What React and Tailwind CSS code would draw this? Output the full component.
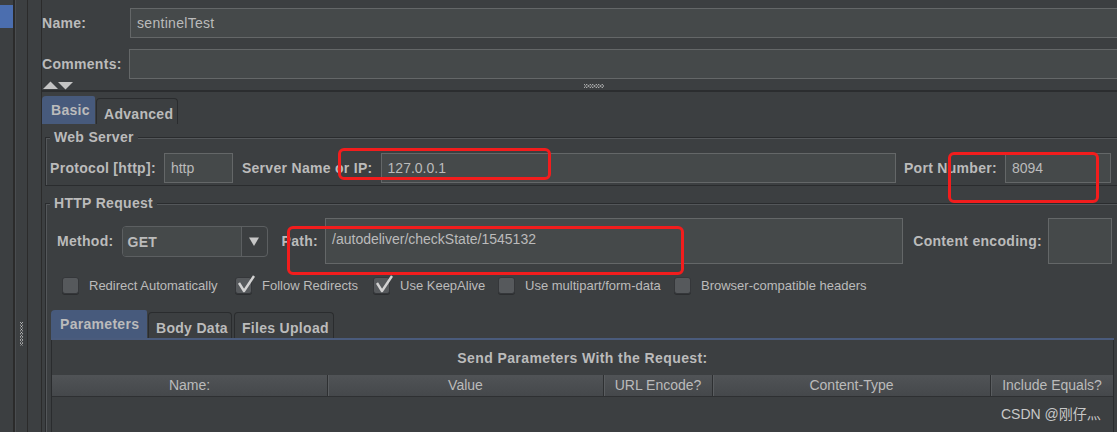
import React from 'react';

// Darcula-ish palette taken from the JMeter screenshot
const FIELD = 'bg-[#45494a] border border-[#646768]';

function Label({ children, className = '' }) {
  return (
    <span className={`font-bold text-[14px] leading-[16px] tracking-[0.3px] whitespace-nowrap shrink-0 ${className}`}>
      {children}
    </span>
  );
}

function Field({ value, className = '' }) {
  return (
    <div className={`${FIELD} flex items-center px-[6px] text-[14px] whitespace-nowrap overflow-hidden ${className}`}>
      {value}
    </div>
  );
}

function Grip({ vertical }) {
  // dotted zig-zag handle of the split panes
  if (vertical) {
    return (
      <svg width="5" height="24" viewBox="0 0 5 24">
        <polyline points="1,0 4,3 1,6 4,9 1,12 4,15 1,18 4,21 1,24" fill="none" stroke="#d6d6d6" strokeWidth="1" strokeDasharray="1 1" />
        <polyline points="4,0 1,3 4,6 1,9 4,12 1,15 4,18 1,21 4,24" fill="none" stroke="#d6d6d6" strokeWidth="1" strokeDasharray="1 1" />
      </svg>
    );
  }
  return (
    <svg width="20" height="6" viewBox="0 0 20 6">
      <polyline points="0,1 3,5 6,1 9,5 12,1 15,5 18,1 20,4" fill="none" stroke="#d6d6d6" strokeWidth="1" strokeDasharray="1 1" />
      <polyline points="0,5 3,1 6,5 9,1 12,5 15,1 18,5 20,2" fill="none" stroke="#d6d6d6" strokeWidth="1" strokeDasharray="1 1" />
    </svg>
  );
}

function CheckBox({ checked, label, className = '' }) {
  return (
    <div className={`flex items-center shrink-0 ${className}`}>
      <span className="relative w-[17px] h-[17px] rounded-[3px] bg-[#56595c] border border-[#35373a] shadow-[0_1px_0_#2c2e30] shrink-0">
        {checked && (
          <svg className="absolute left-[0px] top-[-4px]" width="21" height="20" viewBox="0 0 21 20">
            <polyline points="3,9 8,17 18,2" fill="none" stroke="#d2d2d2" strokeWidth="2.4" strokeLinejoin="round" />
          </svg>
        )}
      </span>
      <span className="ml-[10px] text-[13px] leading-[16px] whitespace-nowrap">{label}</span>
    </div>
  );
}

function Tab({ children, selected, className = '' }) {
  return selected ? (
    <div className={`h-[28px] bg-[#475a7c] rounded-tl-[4px] rounded-tr-[2px] pl-[9px] pt-[2px] shrink-0 ${className}`}>
      <Label>{children}</Label>
    </div>
  ) : (
    <div className={`h-[26px] mt-[2px] border border-b-0 border-[#2a2c2e] rounded-t-[4px] pl-[7px] pt-[3px] shrink-0 ${className}`}>
      <Label>{children}</Label>
    </div>
  );
}

function RedBox({ className }) {
  return <div className={`absolute border-[3px] border-[#f21d1d] rounded-[6px] pointer-events-none ${className}`} />;
}

const COLUMNS = [
  { name: 'Name:', w: 'w-[276px]' },
  { name: 'Value', w: 'w-[276px]' },
  { name: 'URL Encode?', w: 'w-[109px]' },
  { name: 'Content-Type', w: 'w-[278px]' },
  { name: 'Include Equals?', w: 'flex-1' },
];

export default function App() {
  return (
    <div className="relative w-[1117px] h-[432px] overflow-hidden bg-[#3c3f41] flex text-[#bbbbbb] font-['Liberation_Sans','Noto_Sans_CJK_SC',Arial,sans-serif]">
      {/* tree strip */}
      <div className="w-[13px] shrink-0 pt-[5px]">
        <div className="h-[23px] bg-[#4b6eaf]" />
      </div>
      <div className="w-[2px] shrink-0 bg-[#2b2b2b]" />
      <div className="w-[12px] shrink-0 border-l border-[#4a4d50] flex flex-col items-center pt-[322px]">
        <Grip vertical />
      </div>
      <div className="w-[14px] shrink-0 border-l border-[#2b2b2b]" />

      {/* main editor */}
      <main className="flex-1 min-w-0 border-l border-[#2b2b2b] pt-[8px] flex flex-col">
        <div className="flex items-center h-[30px]">
          <Label className="w-[88px]">Name:</Label>
          <Field value="sentinelTest" className="flex-1 h-[30px] -mr-[8px] tracking-[0.3px]" />
        </div>
        <div className="flex items-center h-[30px] mt-[11px]">
          <Label className="w-[87px]">Comments:</Label>
          <Field value="" className="flex-1 h-[30px] -mr-[8px]" />
        </div>

        {/* collapse arrows + splitter */}
        <div className="h-[13px] flex items-start border-b-2 border-[#2b2d2f]">
          <svg className="ml-[1px] mt-[2px]" width="31" height="9" viewBox="0 0 31 9">
            <polygon points="0,8 7.5,0.5 15,8" fill="#c4c4c4" />
            <polygon points="15,1 30,1 22.5,8.5" fill="#c4c4c4" />
          </svg>
          <div className="ml-[510px] mt-[4px]">
            <Grip />
          </div>
        </div>

        {/* Basic / Advanced */}
        <div className="flex items-start pt-[4px] gap-[1px]">
          <Tab selected className="w-[53px]">Basic</Tab>
          <Tab className="w-[82px]">Advanced</Tab>
        </div>
        <div className="h-[2px] bg-[#4a5b7c]" />

        {/* Web Server */}
        <fieldset className="ml-[3px] mt-[5px] w-[1077px] shrink-0 border border-[#2a2c2e] shadow-[inset_1px_1px_0_#54575a] pl-[4px] pr-[10px] pt-[8px] pb-[2px]">
          <legend className="px-[4px] bg-[#3c3f41] text-[14px] leading-[16px]">
            <Label>Web Server</Label>
          </legend>
          <div className="flex items-center h-[30px]">
            <Label>Protocol [http]:</Label>
            <Field value="http" className="ml-[8px] w-[69px] h-[30px]" />
            <Label className="ml-[9px]">Server Name or IP:</Label>
            <Field value="127.0.0.1" className="ml-[8px] flex-1 h-[30px]" />
            <Label className="ml-[8px]">Port Number:</Label>
            <Field value="8094" className="ml-[8px] w-[106px] h-[30px]" />
          </div>
        </fieldset>

        {/* HTTP Request */}
        <fieldset className="ml-[3px] mt-[9px] w-[1077px] shrink-0 border border-[#2a2c2e] shadow-[inset_1px_1px_0_#54575a] pl-[4px] pr-[7px] pt-[7px]">
          <legend className="px-[4px] bg-[#3c3f41] text-[14px] leading-[16px]">
            <Label>HTTP Request</Label>
          </legend>

          <div className="flex items-center h-[46px] pl-[7px]">
            <Label>Method:</Label>
            <div className="ml-[8px] w-[146px] h-[31px] flex rounded-[4px] border border-[#5c5f61] overflow-hidden shrink-0">
              <div className="flex-1 bg-[#45494a] border-r border-[#5c5f61] pl-[5px] pt-[3px]">
                <Label>GET</Label>
              </div>
              <div className="w-[25px] flex items-center justify-center">
                <svg width="10" height="9" viewBox="0 0 10 9">
                  <polygon points="0,0.5 10,0.5 5,9" fill="#c6c6c6" />
                </svg>
              </div>
            </div>
            <Label className="ml-[14px]">Path:</Label>
            <Field value="/autodeliver/checkState/1545132" className="ml-[7px] flex-1 h-[46px] pb-[3px]" />
            <Label className="ml-[10px] tracking-[0.1px]">Content encoding:</Label>
            <Field value="" className="ml-[6px] w-[64px] h-[46px] mr-[2px]" />
          </div>

          <div className="flex items-center h-[17px] mt-[13px] pl-[12px]">
            <CheckBox label="Redirect Automatically" className="w-[173px]" />
            <CheckBox checked label="Follow Redirects" className="w-[138px]" />
            <CheckBox checked label="Use KeepAlive" className="w-[125px]" />
            <CheckBox label="Use multipart/form-data" className="w-[176px]" />
            <CheckBox label="Browser-compatible headers" />
          </div>

          {/* Parameters / Body Data / Files Upload */}
          <div className="flex items-start mt-[16px] ml-[1px] gap-[1px]">
            <Tab selected className="w-[96px]">Parameters</Tab>
            <Tab className="w-[84px]">Body Data</Tab>
            <Tab className="w-[100px] ml-[1px]">Files Upload</Tab>
          </div>
          <div className="ml-[1px] h-[2px] bg-[#4a5b7c]" />

          <div className="ml-[1px] h-[100px] border-l border-r border-[#2a2c2e]">
            <div className="h-[35px] flex items-center justify-center">
              <Label className="tracking-[0.4px]">Send Parameters With the Request:</Label>
            </div>
            <div className="flex h-[22px] bg-gradient-to-b from-[#505356] to-[#45484b] border-b border-[#2e3032]">
              {COLUMNS.map((col, i) => (
                <div
                  key={col.name}
                  className={`${col.w} flex items-center justify-center text-[14px] whitespace-nowrap ${i < COLUMNS.length - 1 ? 'border-r border-[#2e3032] shadow-[1px_0_0_#5a5d60]' : ''}`}
                >
                  {col.name}
                </div>
              ))}
            </div>
          </div>
        </fieldset>
      </main>

      {/* screenshot annotations */}
      <RedBox className="left-[338px] top-[148px] w-[213px] h-[32px]" />
      <RedBox className="left-[948px] top-[152px] w-[151px] h-[51px]" />
      <RedBox className="left-[287px] top-[226px] w-[397px] h-[49px]" />

      <div className="absolute left-[1001px] top-[405px] text-[14px] leading-[18px] text-[#c8c8c8] whitespace-nowrap">
        CSDN @刚仔灬
      </div>
    </div>
  );
}
